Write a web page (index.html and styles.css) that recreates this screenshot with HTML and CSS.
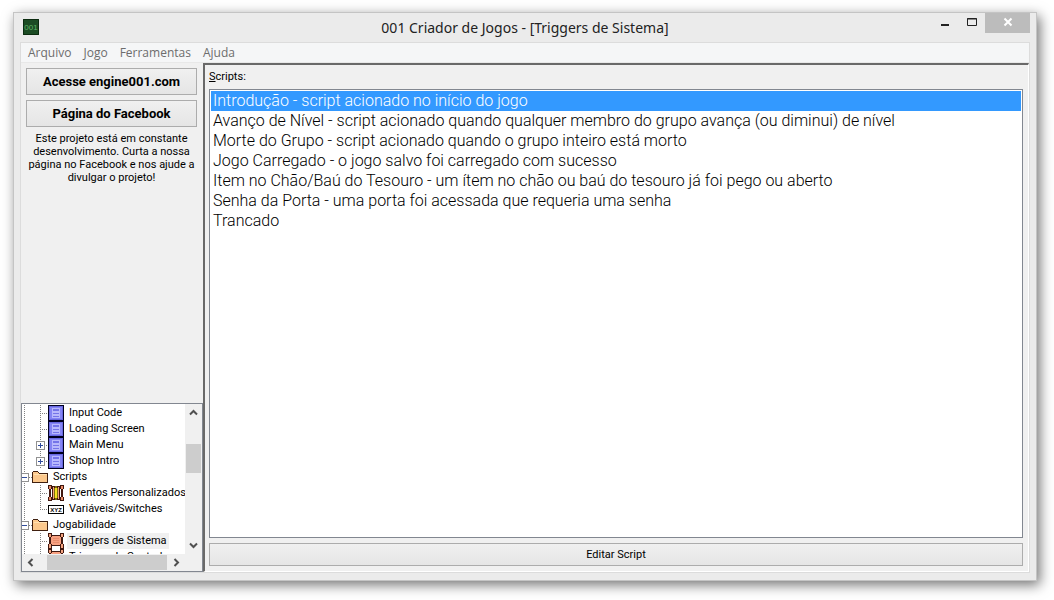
FILE: index.html
```html
<!DOCTYPE html>
<html lang="pt-BR">
<head>
  <meta charset="UTF-8" />
  <meta name="viewport" content="width=device-width, initial-scale=1" />
  <title>001 Criador de Jogos - [Triggers de Sistema]</title>
  <link rel="stylesheet" href="styles.css">
</head>
<body>

<!-- shared icons -->
<svg class="sprite" aria-hidden="true">
  <symbol id="i-screen" viewBox="0 0 16 16">
    <rect width="16" height="16" fill="#000020"/>
    <rect x="1" y="1" width="14" height="14" fill="#6868e0"/>
    <rect x="2" y="2" width="12" height="12" fill="#8484f4"/>
    <path d="M4.5 3.5h7v3h-7zM4.5 7.5h7v2h-7zM4.5 10.5h7v2h-7z" fill="#7474e8" stroke="#b8b8fc"/>
  </symbol>
  <symbol id="i-folder" viewBox="0 0 16 16">
    <path d="M.5 3.500l1-1h4l2 2h8v9H.5z" fill="#fcc88c" stroke="#402010"/>
    <path d="M1.500 5.500h13" stroke="#ffe0b0"/>
  </symbol>
  <symbol id="i-events" viewBox="0 0 16 16">
    <path d="M.5.5h3v3l-1 1v7l1 1v3h-3v-3l1-1v-7l-1-1zM12.500.5h3v3l-1 1v7l1 1v3h-3v-3l1-1v-7l-1-1z" fill="#e88c68" stroke="#401810"/>
    <path d="M4.500 1.500h2v13h-2zM9.500 1.500h2v13h-2z" fill="#f4a480" stroke="#401810"/>
    <path d="M6.500 3.500l1.500-2 1.500 2v9l-1.500 2-1.500-2z" fill="#f4e020" stroke="#807010"/>
  </symbol>
  <symbol id="i-vars" viewBox="0 0 16 16">
    <rect x=".5" y="4.500" width="15" height="8" fill="#fff" stroke="#000"/>
    <text x="8" y="11" class="xyz">XYZ</text>
  </symbol>
  <symbol id="i-trigger" viewBox="0 0 16 16">
    <path d="M3 3h10v9H3z" fill="#f8a080"/>
    <path d="M3 2.500h10M3 12.500h10" stroke="#401810"/>
    <path d="M5 5.500h6M5 7.500h6M5 9.500h6" stroke="#e88c6c"/>
    <path d="M.5.5h3v3l-1 1v6l1 1v4h-3v-4l1-1v-6l-1-1zM12.500.5h3v3l-1 1v6l1 1v4h-3v-4l1-1v-6l-1-1z" fill="#f4a480" stroke="#401810"/>
  </symbol>
  <symbol id="g-root" viewBox="0 0 10 16">
    <path d="M2.500 0v16M3 8.500h7" class="dots"/>
    <path d="M0 4.500h6.500v8H0" class="box"/>
    <path d="M0 8.500h5" class="sign"/>
  </symbol>
  <symbol id="g-item" viewBox="0 0 26 16">
    <path d="M2.500 0v16M18.500 0v16M18 8.500h8" class="dots"/>
  </symbol>
  <symbol id="g-last" viewBox="0 0 26 16">
    <path d="M2.500 0v16M18.500 0v9M18 8.500h8" class="dots"/>
  </symbol>
  <symbol id="g-plus" viewBox="0 0 26 16">
    <path d="M2.500 0v16M18.500 0v16M18 8.500h8" class="dots"/>
    <rect x="14.500" y="4.500" width="8" height="8" class="box"/>
    <path d="M16 8.500h5M18.500 6v5" class="sign"/>
  </symbol>
</svg>

<div class="window">
  <header class="titlebar">
    <svg class="app-icon" viewBox="0 0 16 16" aria-hidden="true">
      <rect width="16" height="16" fill="#1c4c24"/>
      <path d="M.5.5h15v15H.5z" fill="none" stroke="#0c2c10"/>
      <text x="8" y="11">001</text>
    </svg>
    <h1>001 Criador de Jogos - [Triggers de Sistema]</h1>
    <div class="window-buttons">
      <button type="button" aria-label="Minimizar">
        <svg width="10" height="10"><path d="M1 8h8" stroke="#222" stroke-width="2"/></svg>
      </button>
      <button type="button" aria-label="Maximizar">
        <svg width="10" height="10"><path d="M.5 1.500h9v7h-9zM0 2h10" fill="none" stroke="#222"/></svg>
      </button>
      <button type="button" class="close" aria-label="Fechar">
        <svg width="10" height="10"><path d="M1.500 1.500l7 7M8.500 1.500l-7 7" stroke="#fff" stroke-width="2"/></svg>
      </button>
    </div>
  </header>

  <div class="client">
    <nav class="menubar">
      <button type="button">Arquivo</button>
      <button type="button">Jogo</button>
      <button type="button">Ferramentas</button>
      <button type="button">Ajuda</button>
    </nav>

    <div class="workspace">
      <aside class="sidebar">
        <div class="promo">
          <button type="button" class="btn btn-bold">Acesse engine001.com</button>
          <button type="button" class="btn btn-bold">Página do Facebook</button>
          <p>Este projeto está em constante desenvolvimento. Curta a nossa página no Facebook e nos ajude a divulgar o projeto!</p>
        </div>

        <div class="tree-box">
          <div class="tree-view">
            <ul class="tree">
              <li><svg class="guide"><use href="#g-item"/></svg><svg class="icon"><use href="#i-screen"/></svg><span>Input Code</span></li>
              <li><svg class="guide"><use href="#g-item"/></svg><svg class="icon"><use href="#i-screen"/></svg><span>Loading Screen</span></li>
              <li><svg class="guide"><use href="#g-plus"/></svg><svg class="icon"><use href="#i-screen"/></svg><span>Main Menu</span></li>
              <li><svg class="guide"><use href="#g-plus"/></svg><svg class="icon"><use href="#i-screen"/></svg><span>Shop Intro</span></li>
              <li class="root"><svg class="guide"><use href="#g-root"/></svg><svg class="icon"><use href="#i-folder"/></svg><span>Scripts</span></li>
              <li><svg class="guide"><use href="#g-item"/></svg><svg class="icon"><use href="#i-events"/></svg><span>Eventos Personalizados</span></li>
              <li><svg class="guide"><use href="#g-last"/></svg><svg class="icon"><use href="#i-vars"/></svg><span>Variáveis/Switches</span></li>
              <li class="root"><svg class="guide"><use href="#g-root"/></svg><svg class="icon"><use href="#i-folder"/></svg><span>Jogabilidade</span></li>
              <li class="selected"><svg class="guide"><use href="#g-item"/></svg><svg class="icon"><use href="#i-trigger"/></svg><span>Triggers de Sistema</span></li>
              <li><svg class="guide"><use href="#g-item"/></svg><svg class="icon"><use href="#i-trigger"/></svg><span>Triggers de Controle</span></li>
            </ul>
          </div>
          <div class="scroll scroll-v">
            <button type="button" aria-label="Rolar para cima"><svg width="9" height="7"><path d="M1 5.500l3.500-3.500L8 5.500"/></svg></button>
            <div class="track"><div class="thumb"></div></div>
            <button type="button" aria-label="Rolar para baixo"><svg width="9" height="7"><path d="M1 1.500L4.500 5 8 1.500"/></svg></button>
          </div>
          <div class="scroll scroll-h">
            <button type="button" aria-label="Rolar para a esquerda"><svg width="7" height="9"><path d="M5.500 1L2 4.500 5.500 8"/></svg></button>
            <div class="track"><div class="thumb"></div></div>
            <button type="button" aria-label="Rolar para a direita"><svg width="7" height="9"><path d="M1.500 1L5 4.500 1.500 8"/></svg></button>
          </div>
        </div>
      </aside>

      <main class="panel">
        <label for="scripts"><u>S</u>cripts:</label>
        <select id="scripts" size="20">
          <option selected>Introdução - script acionado no início do jogo</option>
          <option>Avanço de Nível - script acionado quando qualquer membro do grupo avança (ou diminui) de nível</option>
          <option>Morte do Grupo - script acionado quando o grupo inteiro está morto</option>
          <option>Jogo Carregado - o jogo salvo foi carregado com sucesso</option>
          <option>Item no Chão/Baú do Tesouro - um ítem no chão ou baú do tesouro já foi pego ou aberto</option>
          <option>Senha da Porta - uma porta foi acessada que requeria uma senha</option>
          <option>Trancado</option>
        </select>
        <button type="button" class="btn">Editar Script</button>
      </main>
    </div>
  </div>
</div>

</body>
</html>
```
FILE: styles.css
```css
* {
  box-sizing: border-box;
}

body {
  margin: 0;
  padding: 12px 17px 19px 13px;
  min-height: 100vh;
  display: flex;
  background: #fff;
  color: #000;
  font-family: Roboto, "Liberation Sans", sans-serif;
  font-size: 11px;
}

button {
  margin: 0;
  padding: 0;
  border: none;
  background: none;
  color: inherit;
  font: inherit;
}

.sprite {
  position: absolute;
  width: 0;
  height: 0;
}

.window {
  flex: 1;
  min-width: 0;
  display: flex;
  flex-direction: column;
  padding: 0 6px 7px;
  background: #ebebeb;
  border: 1px solid #c4c4c4;
  box-shadow: 3px 4px 12px rgba(0, 0, 0, 0.55);
}

/* title bar */
.titlebar {
  display: grid;
  grid-template-columns: 1fr auto 1fr;
  height: 29px;
}

.app-icon {
  width: 16px;
  height: 16px;
  margin: 6px 3px;
}

.app-icon text {
  fill: #5cb464;
  font: 8px "Liberation Sans", sans-serif;
  text-anchor: middle;
}

h1 {
  margin: 0;
  font-family: "Noto Sans", "Open Sans", sans-serif;
  font-size: 14px;
  font-weight: 400;
  line-height: 29px;
  color: #222;
}

.window-buttons {
  display: flex;
  justify-content: flex-end;
}

.window-buttons button {
  width: 27px;
  height: 20px;
}

.window-buttons .close {
  width: 45px;
  background: #bcbcbc;
}

.client {
  flex: 1;
  display: flex;
  flex-direction: column;
  border: 1px solid #dcdcdc;
  background: #f0f0f0;
}

.menubar {
  display: flex;
  gap: 12px;
  padding: 0 7px;
  height: 20px;
  background: #f5f6f7;
  border-bottom: 1px solid #e8e8e8;
  font-family: "Open Sans", "Noto Sans", sans-serif;
  font-size: 12px;
  color: #6d6d6d;
}

.workspace {
  flex: 1;
  display: grid;
  grid-template-columns: 182px 1fr;
}

.btn {
  border: 1px solid #acacac;
  background: linear-gradient(#f0f0f0, #e5e5e5);
}

.btn-bold {
  height: 27px;
  font-size: 13px;
  font-weight: 700;
}

/* sidebar */
.sidebar {
  display: flex;
  flex-direction: column;
  justify-content: space-between;
}

.promo {
  display: flex;
  flex-direction: column;
  gap: 5px;
  padding: 5px 6px 0 5px;
}

.promo p {
  margin: 0;
  line-height: 13px;
  text-align: center;
}

.tree-box {
  display: grid;
  grid-template-columns: minmax(0, 1fr) 17px;
  grid-template-rows: 150px 17px;
  border: 1px solid #828790;
  background: #f0f0f0;
}

.tree-view {
  overflow: hidden;
  background: #fff;
}

.tree {
  margin: 0;
  padding: 1px 0 0;
  list-style: none;
}

.tree li {
  display: flex;
  height: 16px;
  line-height: 16px;
  white-space: nowrap;
}

.tree svg {
  flex: none;
  height: 16px;
  shape-rendering: crispEdges;
}

.tree .guide {
  width: 26px;
}

.tree .root .guide {
  width: 10px;
}

.tree .icon {
  width: 16px;
  margin-right: 3px;
}

.tree span {
  padding: 0 2px;
}

.tree .selected span {
  background: #f0f0f0;
}

.dots {
  fill: none;
  stroke: #808080;
  stroke-dasharray: 1 1;
}

.box {
  fill: #fff;
  stroke: #919191;
}

.sign {
  stroke: #304c9c;
}

.xyz {
  font: 700 6px "Liberation Sans", sans-serif;
  text-anchor: middle;
}

.scroll {
  display: flex;
}

.scroll-v {
  flex-direction: column;
}

.scroll button {
  flex: none;
  width: 17px;
  height: 17px;
  display: grid;
  place-items: center;
}

.scroll path {
  fill: none;
  stroke: #505050;
  stroke-width: 2;
}

.track {
  flex: 1;
}

.thumb {
  background: #cdcdcd;
}

.scroll-v .thumb {
  height: 29px;
  margin: 23px 1px 0;
}

.scroll-h .thumb {
  width: 120px;
  height: 15px;
  margin: 1px 0 0 8px;
}

/* script list */
.panel {
  display: flex;
  flex-direction: column;
  padding: 5px;
  padding-left: 4px;
  border: 1px solid #fff;
  border-top: 2px solid #696969;
  border-left: 2px solid #696969;
}

.panel label {
  line-height: 13px;
  margin-bottom: 6px;
}

.panel select {
  flex: 1 1 0;
  min-height: 0;
  width: 100%;
  margin: 0 0 5px;
  padding: 1px;
  border: 1px solid #828790;
  border-radius: 0;
  outline: none;
  overflow: hidden;
  background: #fff;
  color: #000;
  font: 16px Roboto, "Liberation Sans", sans-serif;
}

.panel option {
  min-height: 20px;
  padding: 0 2px;
  font-weight: 300;
  line-height: 20px;
}

.panel option:checked {
  background: #3399ff linear-gradient(#3399ff, #3399ff);
  color: #fff;
  -webkit-text-fill-color: #fff;
}

.panel .btn {
  height: 23px;
}
```
